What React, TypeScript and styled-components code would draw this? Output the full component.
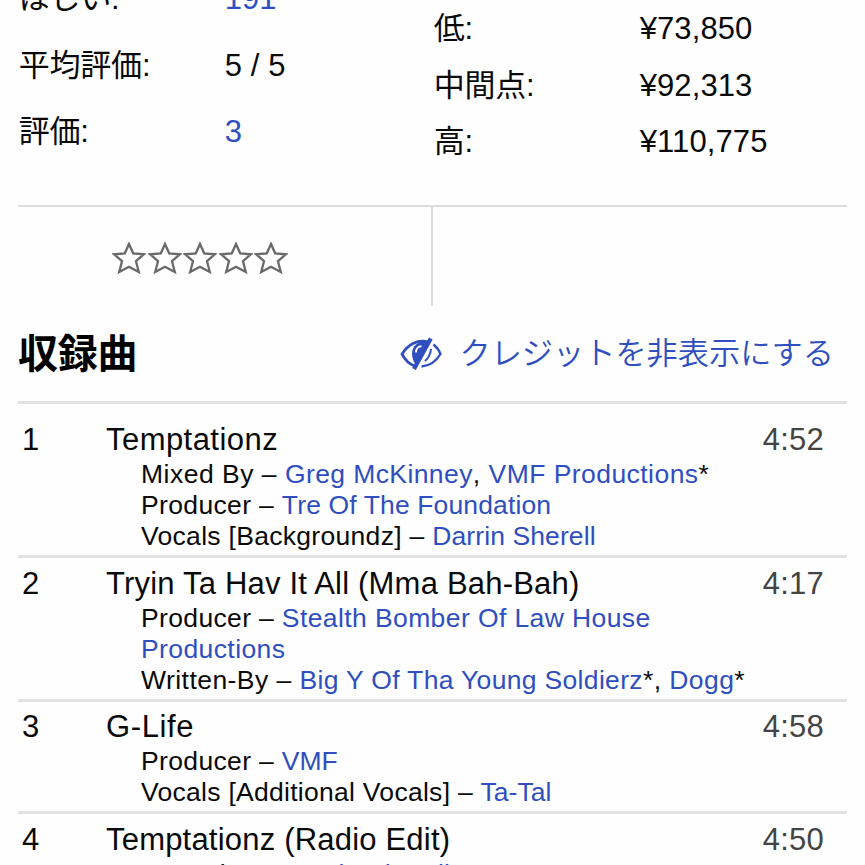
import styled, { createGlobalStyle } from "styled-components";

const GlobalStyle = createGlobalStyle`
  * {
    box-sizing: border-box;
  }

  body {
    margin: 0;
    background: #fefefe;
    color: #0a0a0a;
    font-family: "Liberation Sans", "Noto Sans CJK JP", sans-serif;
    overflow: hidden;
  }
`;

type Artist = { name: string; anv?: boolean; tracking?: number };
type Credit = { role: string; tracking?: number; artists: Artist[] };
type Track = { position: string; title: string; tracking?: number; duration: string; credits: Credit[] };

const tracks: Track[] = [
  {
    position: "1",
    title: "Temptationz",
    tracking: 0.45,
    duration: "4:52",
    credits: [
      {
        role: "Mixed By",
        tracking: 0.5,
        artists: [{ name: "Greg McKinney" }, { name: "VMF Productions", anv: true, tracking: 0.45 }],
      },
      { role: "Producer", artists: [{ name: "Tre Of The Foundation", tracking: 0.13 }] },
      { role: "Vocals [Backgroundz]", tracking: 0.3, artists: [{ name: "Darrin Sherell", tracking: 0.1 }] },
    ],
  },
  {
    position: "2",
    title: "Tryin Ta Hav It All (Mma Bah-Bah)",
    duration: "4:17",
    credits: [
      { role: "Producer", artists: [{ name: "Stealth Bomber Of Law House Productions" }] },
      {
        role: "Written-By",
        tracking: 0.45,
        artists: [
          { name: "Big Y Of Tha Young Soldierz", anv: true, tracking: 0.33 },
          { name: "Dogg", anv: true },
        ],
      },
    ],
  },
  {
    position: "3",
    title: "G-Life",
    tracking: 0.6,
    duration: "4:58",
    credits: [
      { role: "Producer", artists: [{ name: "VMF", tracking: 0 }] },
      { role: "Vocals [Additional Vocals]", tracking: 0.28, artists: [{ name: "Ta-Tal", tracking: 0 }] },
    ],
  },
  {
    position: "4",
    title: "Temptationz (Radio Edit)",
    duration: "4:50",
    credits: [{ role: "Featuring", artists: [{ name: "Darrin Sherell", tracking: 0.1 }] }],
  },
];

const Page = styled.main`
  width: 865px;
  height: 865px;
  padding: 0 18px;
  overflow: hidden;
`;

const Stats = styled.section`
  display: grid;
  grid-template-columns: 415px 1fr;
  height: 205px;
`;

const StatList = styled.dl<{ $row: number; $shift: number }>`
  display: grid;
  grid-template-columns: 206px 1fr;
  grid-auto-rows: ${({ $row }) => $row}px;
  align-items: center;
  align-content: start;
  margin: ${({ $shift }) => $shift}px 0 0;
  padding-left: 0.7px;
  font-size: 31px;
  line-height: 40px;
  white-space: nowrap;
`;

const Label = styled.dt`
  letter-spacing: -0.2px;
`;

const Value = styled.dd<{ $link?: boolean }>`
  margin: 0;
  color: ${({ $link }) => ($link ? "#2f4fc0" : "inherit")};
  letter-spacing: 0.1px;
`;

const Rating = styled.section`
  display: grid;
  grid-template-columns: 415px 1fr;
  height: 101px;
  border-top: 2px solid #dcdcdc;
`;

const Stars = styled.div`
  display: flex;
  gap: 1.5px;
  padding: 34px 0 0 94px;
  border-right: 2px solid #dcdcdc;
`;

const Header = styled.header`
  display: flex;
  justify-content: space-between;
  align-items: center;
  height: 95px;
  padding: 0 13px 0 0;
`;

const Heading = styled.h2`
  margin: 0;
  font-size: 40px;
  line-height: 50px;
  font-weight: 700;
  letter-spacing: -0.3px;
  color: #000;
`;

const Toggle = styled.a`
  display: flex;
  align-items: center;
  gap: 17px;
  color: #2f4fc0;
  font-family: "Noto Sans CJK JP", sans-serif;
  font-size: 31.2px;
  font-weight: 350;
  line-height: 40px;
`;

const ToggleText = styled.span`
  padding-bottom: 5px;
`;

const TrackRow = styled.article<{ $first?: boolean }>`
  display: grid;
  grid-template-columns: 84px 1fr auto;
  padding: ${({ $first }) => ($first ? "16px" : "5.5px")} 23px 3px 4px;
  border-top: 3px solid #e2e2e2;
  font-size: 31px;
  line-height: 40px;
`;

const Title = styled.div<{ $tracking?: number }>`
  margin-bottom: -1px;
  letter-spacing: ${({ $tracking = 0.2 }) => $tracking}px;
  white-space: nowrap;
`;

const Duration = styled.div`
  color: #444;
  letter-spacing: 0.2px;
`;

const Credits = styled.div`
  width: 646px;
  padding-left: 35px;
  font-size: 26.5px;
  line-height: 31px;
`;

const CreditLine = styled.div<{ $tracking?: number }>`
  letter-spacing: ${({ $tracking = 0.35 }) => $tracking}px;
`;

const ArtistLink = styled.a<{ $tracking?: number }>`
  color: #2f4fc0;
  letter-spacing: ${({ $tracking = 0.4 }) => $tracking}px;
`;

const Star = () => (
  <svg width="34" height="34" viewBox="0 0 34 34">
    <path
      d="M17 3 21.200 12.300 31.800 13.300 24 20.200 26.800 31 17 25.700 7.200 31 10 20.200 2.200 13.300 12.800 12.300Z"
      fill="none"
      stroke="#696969"
      strokeWidth="2.3"
    />
  </svg>
);

const EyeSlash = () => (
  <svg width="42" height="34" viewBox="0 0 42 34" fill="none" stroke="#2f4fc0">
    <path d="M28 4.800C18 2 8 7.500 2 17.200C5 23 9 27 14.500 29" strokeWidth="2.800" />
    <path d="M29 4.500C19 3.500 12 8.500 12 16.500C12 21 13.500 25 16 28Z" fill="#2f4fc0" stroke="none" />
    <path d="M16 15.500C16 11.500 18.500 9.300 21.500 9.300" stroke="#fefefe" strokeWidth="1.900" />
    <path d="M30.800 1.500 14 32" strokeWidth="4.200" />
    <path d="M33.500 7.500C36.500 10 39 13 40.500 17C36 24.500 30 29 21.500 29.500" strokeWidth="2.300" />
    <path d="M31 12C30.500 17 28.500 21 25 24" strokeWidth="2" />
  </svg>
);

const TrackItem = ({ position, title, tracking, duration, credits, first }: Track & { first?: boolean }) => (
  <TrackRow $first={first}>
    <div>{position}</div>
    <div>
      <Title $tracking={tracking}>{title}</Title>
      <Credits>
        {credits.map((credit) => (
          <CreditLine key={credit.role} $tracking={credit.tracking}>
            {credit.role} –{" "}
            {credit.artists.map(({ name, anv, tracking }, i) => (
              <span key={name}>
                {i > 0 && ", "}
                <ArtistLink $tracking={tracking}>{name}</ArtistLink>
                {anv && "*"}
              </span>
            ))}
          </CreditLine>
        ))}
      </Credits>
    </div>
    <Duration>{duration}</Duration>
  </TrackRow>
);

const App = () => {
  return (
    <>
      <GlobalStyle />
      <Page>
        <Stats>
          <StatList $row={66.5} $shift={-34}>
            <Label>ほしい:</Label>
            <Value $link>191</Value>
            <Label>平均評価:</Label>
            <Value>5 / 5</Value>
            <Label>評価:</Label>
            <Value $link>3</Value>
          </StatList>
          <StatList $row={56.5} $shift={1}>
            <Label>低:</Label>
            <Value>¥73,850</Value>
            <Label>中間点:</Label>
            <Value>¥92,313</Value>
            <Label>高:</Label>
            <Value>¥110,775</Value>
          </StatList>
        </Stats>
        <Rating>
          <Stars>
            {[1, 2, 3, 4, 5].map((n) => (
              <Star key={n} />
            ))}
          </Stars>
        </Rating>
        <Header>
          <Heading>収録曲</Heading>
          <Toggle>
            <EyeSlash />
            <ToggleText>クレジットを非表示にする</ToggleText>
          </Toggle>
        </Header>
        {tracks.map((track, i) => (
          <TrackItem key={track.position} {...track} first={i === 0} />
        ))}
      </Page>
    </>
  );
};

export default App;
